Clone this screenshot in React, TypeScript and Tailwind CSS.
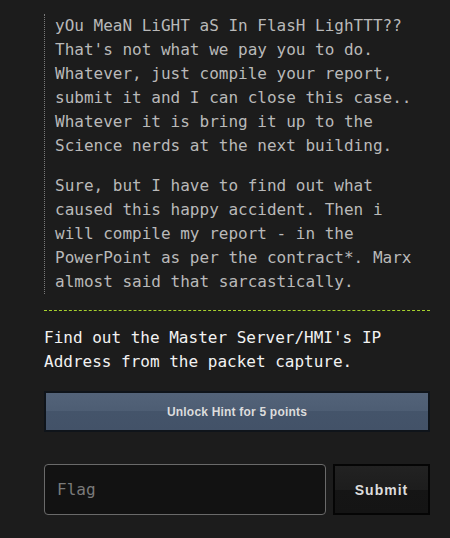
import React from "react";

export default function App() {
  const mono = { fontFamily: '"DejaVu Sans Mono", monospace' };
  return (
    <div className="min-h-[538px] w-[450px] bg-[#1c1c1c] pl-[44px] pr-[20px] pt-[14px]" style={mono}>
      <div className="border-l border-dotted border-[#7a7a7a] pl-[10px] text-[16px] leading-[24px] text-[#b9b9b9]">
        <p>
          yOu MeaN LiGHT aS In FlasH LighTTT?? That's not what we pay you to do. Whatever, just compile your report, submit it and I can close this case.. Whatever it is bring it up to the Science nerds at the next building.
        </p>
        <p className="mt-[16px]">
          Sure, but I have to find out what caused this happy accident. Then i will compile my report - in the PowerPoint as per the contract*. Marx almost said that sarcastically.
        </p>
      </div>
      <div className="mt-[16px] border-t border-dashed border-[#a6d22e]" />
      <p className="mt-[15px] text-[16px] leading-[24px] text-[#f2f2f2]">
        Find out the Master Server/HMI's IP Address from the packet capture.
      </p>
      <button
        className="mt-[17px] flex h-[41px] w-full items-center justify-center border-2 border-[#0f141a] bg-[linear-gradient(to_bottom,#536379_0%,#4d5d73_50%,#44546a_50%,#435268_100%)] pt-[1px] text-[12px] font-bold tracking-[0.2px] text-[#dcdcdc]"
        style={{ fontFamily: '"Liberation Sans", Arial, sans-serif' }}
      >
        Unlock Hint for 5 points
      </button>
      <div className="mt-[32px] flex h-[51px] gap-[7px]">
        <div className="flex flex-1 items-center rounded-[4px] border border-[#6a6a6a] bg-[#121212] pl-[12px] text-[16px] text-[#7a7a7a]">
          Flag
        </div>
        <button
          className="flex w-[97px] items-center justify-center border-2 border-[#050505] bg-[linear-gradient(to_bottom,#222_0%,#1d1d1d_50%,#151515_50%,#141414_100%)] pt-[1px] text-[14px] font-bold tracking-[1px] text-[#dcdcdc]"
          style={{ fontFamily: '"Liberation Sans", Arial, sans-serif' }}
        >
          Submit
        </button>
      </div>
    </div>
  );
}
